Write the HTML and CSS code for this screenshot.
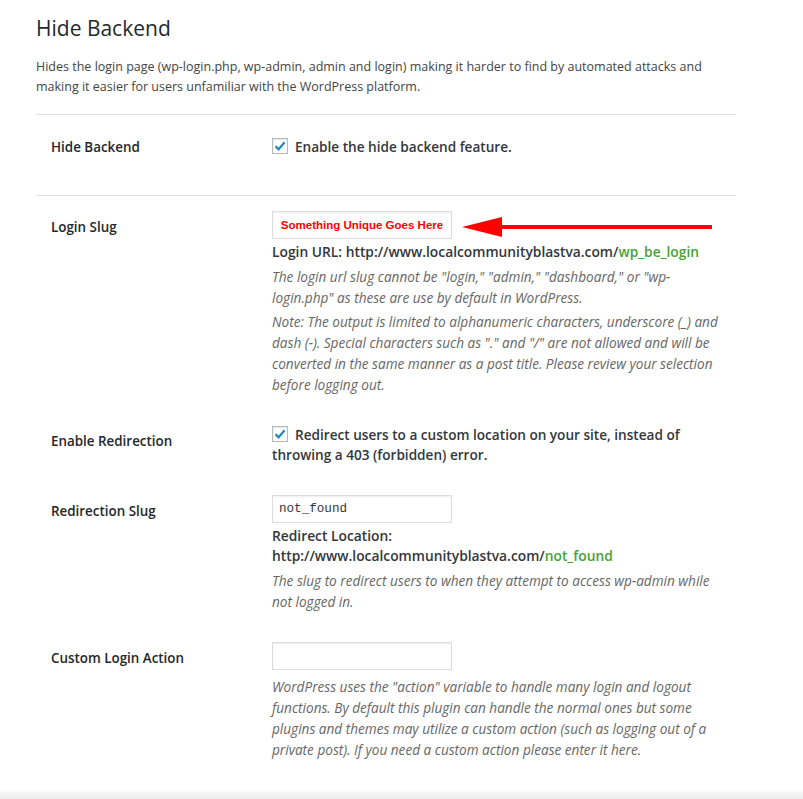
FILE: index.html
```html
<!DOCTYPE html>
<html lang="en">
<head>
    <meta charset="UTF-8">
    <meta name="viewport" content="width=device-width, initial-scale=1.0">
    <title>Hide Backend</title>
    <link rel="stylesheet" href="styles.css">
</head>
<body>
  <div class="wrap">
    <h1>Hide Backend</h1>
    <p class="intro">Hides the login page (wp-login.php, wp-admin, admin and login) making it harder to find by automated attacks and making it easier for users unfamiliar with the WordPress platform.</p>

    <div class="section first">
      <div class="row">
        <div class="label">Hide Backend</div>
        <div class="field">
          <label class="check"><span class="box"><svg viewBox="0 0 16 16" width="16" height="16"><path d="M3.5 8.2 L6.6 11.3 L12.6 4.2" fill="none" stroke="#1e8cbe" stroke-width="2.2"/></svg></span>Enable the hide backend feature.</label>
        </div>
      </div>
    </div>

    <div class="section">
      <div class="row">
        <div class="label">Login Slug</div>
        <div class="field">
          <div class="input slug">Something Unique Goes Here</div>
          <div class="arrow"><svg viewBox="0 0 252 20" width="252" height="20"><polygon points="0,10 40,0 40,20" fill="#ff0000"/><rect x="38" y="8" width="212" height="4" fill="#ff0000"/></svg></div>
          <p class="url">Login URL: http://www.localcommunityblastva.com/<span class="green">wp_be_login</span></p>
          <p class="description">The login url slug cannot be "login," "admin," "dashboard," or "wp-login.php" as these are use by default in WordPress.</p>
          <p class="description">Note: The output is limited to alphanumeric characters, underscore (_) and dash (-). Special characters such as "." and "/" are not allowed and will be converted in the same manner as a post title. Please review your selection before logging out.</p>
        </div>
      </div>

      <div class="row">
        <div class="label">Enable Redirection</div>
        <div class="field">
          <label class="check"><span class="box"><svg viewBox="0 0 16 16" width="16" height="16"><path d="M3.5 8.2 L6.6 11.3 L12.6 4.2" fill="none" stroke="#1e8cbe" stroke-width="2.2"/></svg></span>Redirect users to a custom location on your site, instead of throwing a 403 (forbidden) error.</label>
        </div>
      </div>

      <div class="row">
        <div class="label">Redirection Slug</div>
        <div class="field">
          <div class="input mono">not_found</div>
          <p class="url">Redirect Location:<br>http://www.localcommunityblastva.com/<span class="green">not_found</span></p>
          <p class="description">The slug to redirect users to when they attempt to access wp-admin while not logged in.</p>
        </div>
      </div>

      <div class="row">
        <div class="label">Custom Login Action</div>
        <div class="field">
          <div class="input"></div>
          <p class="description">WordPress uses the "action" variable to handle many login and logout functions. By default this plugin can handle the normal ones but some plugins and themes may utilize a custom action (such as logging out of a private post). If you need a custom action please enter it here.</p>
        </div>
      </div>
    </div>
  </div>
  <div class="shade"></div>
</body>
</html>
```

FILE: styles.css
```css
body {
    margin: 0;
    background: #fff;
    font-family: "Open Sans", "Noto Sans", sans-serif;
    color: #444;
    font-size: 13px;
}

.wrap {
    width: 700px;
    margin-left: 36px;
    padding-top: 12px;
}

h1 {
    font-size: 21px;
    font-weight: 400;
    color: #23282d;
    margin: 0;
    line-height: 32px;
}

.intro {
    margin: 13px 0 0;
    line-height: 20px;
    font-size: 12.5px;
    padding-bottom: 17px;
    border-bottom: 1px solid #ddd;
}

.section.first {
    border-bottom: 1px solid #ddd;
    padding: 22px 0 38px;
}

.row {
    display: flex;
    padding: 15px 0 15px 15px;
}

.section.first .row {
    padding: 0 0 0 15px;
}

.label {
    width: 221px;
    flex-shrink: 0;
    font-weight: 600;
    font-size: 13.4px;
    color: #23282d;
    line-height: 18px;
    padding-top: 7px;
}

.section.first .label {
    padding-top: 1px;
}

.field {
    width: 452px;
    position: relative;
    color: #32373c;
}

.check {
    display: block;
    font-weight: 600;
    font-size: 13.6px;
    line-height: 20px;
}

.box {
    display: inline-block;
    width: 14px;
    height: 14px;
    border: 1px solid #b4b9be;
    box-shadow: inset 0 1px 2px rgba(0, 0, 0, 0.1);
    vertical-align: -2px;
    margin: 0 7px 0 0;
    position: relative;
}

.box svg {
    position: absolute;
    left: -1px;
    top: -1px;
}

.input {
    width: 178px;
    height: 26px;
    border: 1px solid #ddd;
    box-shadow: inset 0 1px 2px rgba(0, 0, 0, 0.07);
    margin: 0;
    line-height: 26px;
    box-sizing: content-box;
}

.input.slug {
    font-family: "Liberation Sans", Arial, sans-serif;
    font-weight: 700;
    font-size: 11.5px;
    color: #ff0000;
    text-align: center;
}

.input.mono {
    font-family: "Liberation Mono", monospace;
    font-size: 12.6px;
    color: #32373c;
    padding-left: 6px;
    width: 172px;
}

.arrow {
    position: absolute;
    left: 190px;
    top: 6px;
    line-height: 0;
}

.url {
    margin: 3px 0 0;
    font-weight: 600;
    font-size: 13.8px;
    line-height: 20px;
}

.green {
    color: #46a332;
}

.description {
    margin: 3px 0 0;
    font-style: italic;
    color: #666;
    font-size: 13.6px;
    line-height: 21px;
}

.url + .description {
    margin-top: 4px;
}

.input + .description {
    margin-top: 6px;
}

.shade {
    position: fixed;
    left: 0;
    right: 0;
    bottom: 0;
    height: 10px;
    background: linear-gradient(#fff, #ebebeb);
}
```
